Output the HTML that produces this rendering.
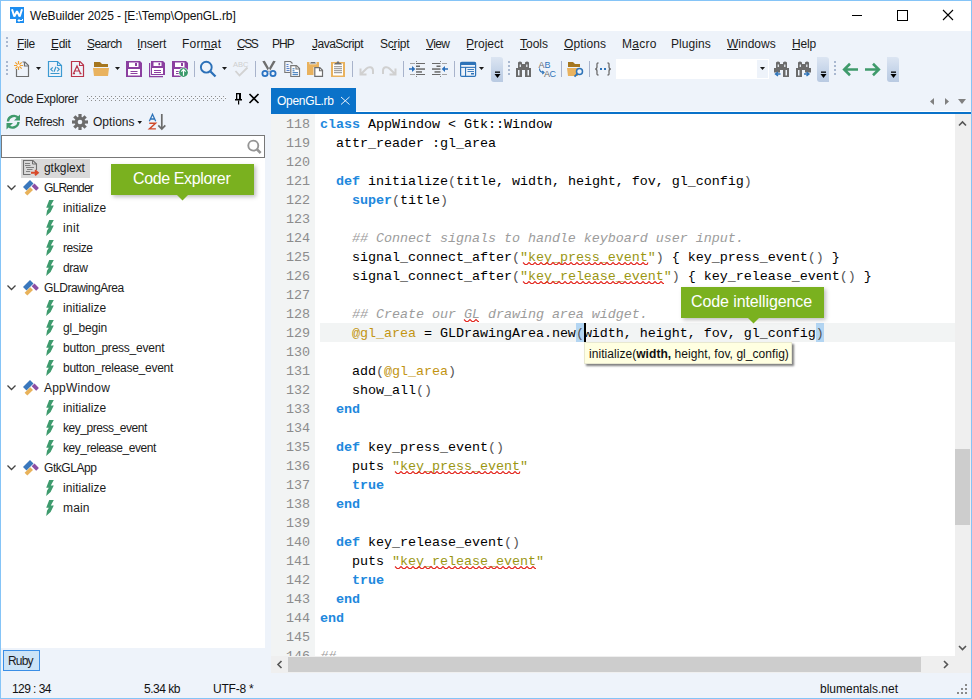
<!DOCTYPE html>
<html><head><meta charset="utf-8">
<style>
*{margin:0;padding:0;box-sizing:border-box}
html,body{width:972px;height:699px;overflow:hidden;background:#eef3fa;font-family:"Liberation Sans",sans-serif;font-size:12px;color:#000}
.a{position:absolute}
.t{position:absolute;white-space:pre;line-height:1;letter-spacing:-0.3px}
.menu .t{top:38px;color:#1b1b1b}
.ul{position:absolute;height:1px;background:#1b1b1b;top:49px}
#code{position:absolute;left:319px;top:114px;font-family:"Liberation Mono",monospace;font-size:13.4px;letter-spacing:-0.04px;line-height:19px;white-space:pre;color:#000}
#nums{position:absolute;left:285px;top:114px;font-family:"Liberation Mono",monospace;font-size:13.4px;letter-spacing:-0.04px;line-height:19px;white-space:pre;color:#8c8c8c}
.k{color:#2088dd;font-weight:bold}
.c{color:#9c9c9c;font-style:italic}
.s{color:#9a9612}
.q{color:#8a8a8a}
.v{color:#c29412}
.p{color:#555}
.tree .t{color:#1b1b1b}
svg.ov{position:absolute;left:0;top:0}
</style></head><body>
<!-- title bar -->
<div class="a" style="left:0;top:0;width:972px;height:31px;background:#fff"></div>
<div class="t" style="left:30px;top:10px;color:#111;letter-spacing:-0.1px">WeBuilder 2025 - [E:\Temp\OpenGL.rb]</div>

<!-- menu -->
<div class="menu">
 <div class="t" style="left:17px;letter-spacing:-0.35px">File</div><div class="ul" style="left:17px;width:7px"></div>
 <div class="t" style="left:51px;letter-spacing:-0.3px">Edit</div><div class="ul" style="left:51px;width:7px"></div>
 <div class="t" style="left:87px;letter-spacing:-0.55px">Search</div><div class="ul" style="left:87px;width:7px"></div>
 <div class="t" style="left:137px;letter-spacing:-0.15px">Insert</div><div class="ul" style="left:138px;width:3px"></div>
 <div class="t" style="left:182px;letter-spacing:0.2px">Format</div><div class="ul" style="left:204px;width:10px"></div>
 <div class="t" style="left:237px;letter-spacing:-1.5px">CSS</div><div class="ul" style="left:237px;width:7px"></div>
 <div class="t" style="left:272px;letter-spacing:-0.9px">PHP</div>
 <div class="t" style="left:312px;letter-spacing:-0.5px">JavaScript</div><div class="ul" style="left:312px;width:5px"></div>
 <div class="t" style="left:380px;letter-spacing:-0.2px">Script</div><div class="ul" style="left:392px;width:4px"></div>
 <div class="t" style="left:426px;letter-spacing:-0.6px">View</div><div class="ul" style="left:426px;width:7px"></div>
 <div class="t" style="left:466px;letter-spacing:0px">Project</div><div class="ul" style="left:467px;width:7px"></div>
 <div class="t" style="left:520px;letter-spacing:0px">Tools</div><div class="ul" style="left:520px;width:7px"></div>
 <div class="t" style="left:564px;letter-spacing:0.1px">Options</div><div class="ul" style="left:564px;width:9px"></div>
 <div class="t" style="left:622px;letter-spacing:0.3px">Macro</div><div class="ul" style="left:632px;width:7px"></div>
 <div class="t" style="left:671px;letter-spacing:0.08px">Plugins</div>
 <div class="t" style="left:727px;letter-spacing:0px">Windows</div><div class="ul" style="left:727px;width:11px"></div>
 <div class="t" style="left:792px;letter-spacing:-0.17px">Help</div><div class="ul" style="left:792px;width:8px"></div>
</div>

<!-- toolbar combobox -->
<div class="a" style="left:616px;top:59px;width:153px;height:20px;background:#fff"></div>
<div class="a" style="left:757px;top:60px;width:11px;height:18px;background:#eef3fa"></div>
<!-- overflow chevrons -->
<div class="a" style="left:491px;top:57px;width:12px;height:25px;background:linear-gradient(#dce5f2,#c4d3e8 60%,#b9cae2);border-radius:0 3px 0 3px"></div>
<div class="a" style="left:817px;top:57px;width:12px;height:25px;background:linear-gradient(#dce5f2,#c4d3e8 60%,#b9cae2);border-radius:0 3px 0 3px"></div>
<div class="a" style="left:887px;top:57px;width:12px;height:25px;background:linear-gradient(#dce5f2,#c4d3e8 60%,#b9cae2);border-radius:0 3px 0 3px"></div>

<!-- panel header -->
<div class="t" style="left:6px;top:93px;color:#1b1b1b;letter-spacing:-0.38px">Code Explorer</div>


<!-- tab -->
<div class="a" style="left:271px;top:88px;width:85px;height:26px;background:#0a72c9"></div>
<div class="t" style="left:277px;top:95px;color:#fff;letter-spacing:-0.3px">OpenGL.rb</div>
<div class="a" style="left:356px;top:111px;width:616px;height:1px;background:#fff"></div>
<div class="a" style="left:356px;top:112px;width:616px;height:2px;background:#0a72c9"></div>

<!-- code explorer toolbar text -->
<div class="t" style="left:25px;top:116px;color:#1b1b1b;letter-spacing:-0.42px">Refresh</div>
<div class="t" style="left:93px;top:116px;color:#1b1b1b;letter-spacing:0.03px">Options</div>

<!-- left panel -->
<div class="a" style="left:1px;top:135px;width:264px;height:513px;background:#fff"></div>
<div class="a" style="left:1px;top:135px;width:264px;height:23px;border:1px solid #787878;background:#fff"></div>
<div class="a" style="left:21px;top:159px;width:69px;height:19px;background:#d9d9d9"></div>

<div class="tree">
 <div class="t" style="left:44px;top:162px;letter-spacing:-0.06px">gtkglext</div>
 <div class="t" style="left:44px;top:182px;letter-spacing:-0.8px">GLRender</div>
 <div class="t" style="left:63px;top:202px;letter-spacing:0.05px">initialize</div>
 <div class="t" style="left:63px;top:222px;letter-spacing:0.3px">init</div>
 <div class="t" style="left:63px;top:242px;letter-spacing:-0.4px">resize</div>
 <div class="t" style="left:63px;top:262px;letter-spacing:-0.4px">draw</div>
 <div class="t" style="left:44px;top:282px;letter-spacing:-0.43px">GLDrawingArea</div>
 <div class="t" style="left:63px;top:302px;letter-spacing:0.05px">initialize</div>
 <div class="t" style="left:63px;top:322px;letter-spacing:-0.17px">gl_begin</div>
 <div class="t" style="left:63px;top:342px;letter-spacing:-0.23px">button_press_event</div>
 <div class="t" style="left:63px;top:362px;letter-spacing:-0.27px">button_release_event</div>
 <div class="t" style="left:44px;top:382px;letter-spacing:0.22px">AppWindow</div>
 <div class="t" style="left:63px;top:402px;letter-spacing:0.05px">initialize</div>
 <div class="t" style="left:63px;top:422px;letter-spacing:-0.46px">key_press_event</div>
 <div class="t" style="left:63px;top:442px;letter-spacing:-0.47px">key_release_event</div>
 <div class="t" style="left:44px;top:462px;letter-spacing:-0.44px">GtkGLApp</div>
 <div class="t" style="left:63px;top:482px;letter-spacing:0.05px">initialize</div>
 <div class="t" style="left:63px;top:502px;letter-spacing:0.15px">main</div>
</div>

<!-- Ruby button -->
<div class="a" style="left:3px;top:650px;width:37px;height:21px;border:1px solid #3a8ee6;background:#cce4f7"></div>
<div class="t" style="left:8px;top:655px;color:#1b1b1b;letter-spacing:-0.8px">Ruby</div>

<!-- editor -->
<div class="a" style="left:271px;top:114px;width:684px;height:542px;background:#fff"></div>
<div class="a" style="left:271px;top:114px;width:44px;height:542px;background:#f2f4f4"></div>
<div class="a" style="left:320px;top:323px;width:635px;height:19px;background:#f2f4f4"></div>
<div class="a" style="left:576px;top:323px;width:8px;height:19px;background:#b3d5f2"></div>
<div class="a" style="left:816px;top:323px;width:8px;height:19px;background:#b3d5f2"></div>
<div class="a" style="left:271px;top:114px;width:684px;height:542px;overflow:hidden">
<div id="nums" style="left:15px;top:1px">118
119
120
121
122
123
124
125
126
127
128
129
130
131
132
133
134
135
136
137
138
139
140
141
142
143
144
145
146</div>
<div id="code" style="left:49px;top:1px"><span class="k">class</span> AppWindow &lt; Gtk::Window
  attr_reader :gl_area

  <span class="k">def</span> initialize<span class="p">(</span>title, width, height, fov, gl_config<span class="p">)</span>
    <span class="k">super</span><span class="p">(</span>title<span class="p">)</span>

    <span class="c">## Connect signals to handle keyboard user input.</span>
    signal_connect_after<span class="p">(</span><span class="s">"key_press_event"</span><span class="p">)</span> { key_press_event<span class="p">()</span> }
    signal_connect_after<span class="p">(</span><span class="s">"key_release_event"</span><span class="p">)</span> { key_release_event<span class="p">()</span> }

    <span class="c">## Create our GL drawing area widget.</span>
    <span class="v">@gl_area</span> = GLDrawingArea.new<span class="p">(</span>width, height, fov, gl_config<span class="p">)</span>

    add<span class="p">(</span><span class="v">@gl_area</span><span class="p">)</span>
    show_all<span class="p">()</span>
  <span class="k">end</span>

  <span class="k">def</span> key_press_event<span class="p">()</span>
    puts <span class="s">"key_press_event"</span>
    <span class="k">true</span>
  <span class="k">end</span>

  <span class="k">def</span> key_release_event<span class="p">()</span>
    puts <span class="s">"key_release_event"</span>
    <span class="k">true</span>
  <span class="k">end</span>
<span class="k">end</span>

<span class="c">##</span></div>
</div>
<!-- caret -->
<div class="a" style="left:584px;top:323px;width:2px;height:19px;background:#000"></div>

<!-- scrollbars -->
<div class="a" style="left:955px;top:114px;width:16px;height:559px;background:#efefef"></div>
<div class="a" style="left:955px;top:449px;width:15px;height:76px;background:#cdcdcd"></div>
<div class="a" style="left:271px;top:656px;width:700px;height:17px;background:#efefef"></div>
<div class="a" style="left:288px;top:657px;width:633px;height:15px;background:#cdcdcd"></div>

<!-- status -->
<div class="t" style="left:12px;top:683px;color:#111;letter-spacing:-0.56px">129 : 34</div>
<div class="t" style="left:144px;top:683px;color:#111;letter-spacing:-0.5px">5.34 kb</div>
<div class="t" style="left:213px;top:683px;color:#111;letter-spacing:-0.23px">UTF-8 *</div>
<div class="t" style="left:820px;top:683px;color:#111;letter-spacing:0px">blumentals.net</div>

<!-- SVG icons overlay -->
<svg class="ov" width="972" height="699" viewBox="0 0 972 699">
 <!-- logo -->
 <rect x="10" y="7" width="14" height="12" fill="#1e8ef0"/>
 <rect x="16" y="18" width="8" height="5" fill="#1e8ef0"/>
 <path d="M12 9.2 L14.3 16.5 L17 11.2 L19.7 16.5 L22 9.2" stroke="#fff" stroke-width="2" fill="none" stroke-linejoin="bevel"/>
 <path d="M22.5 19 V20.5 H18 M19.5 19 L18 20.5 L19.5 22" stroke="#fff" stroke-width="1" fill="none"/>
 <!-- window controls -->
 <rect x="852" y="15" width="10" height="1" fill="#000"/>
 <rect x="897.5" y="10.5" width="10" height="10" fill="none" stroke="#000" stroke-width="1"/>
 <path d="M943 10 L953 20 M953 10 L943 20" stroke="#000" stroke-width="1.1"/>

 <defs><pattern id="dots" patternUnits="userSpaceOnUse" x="87" y="96" width="4" height="4"><rect x="0" y="0" width="1" height="1" fill="#8e8e8e"/><rect x="2" y="2" width="1" height="1" fill="#8e8e8e"/><rect x="0" y="-1" width="1" height="1" fill="#fff"/><rect x="2" y="1" width="1" height="1" fill="#fff"/></pattern></defs>
 <rect x="87" y="95" width="139" height="6" fill="url(#dots)"/>
 <!-- grips -->
 <g fill="#a9b8d0">
  <rect x="6" y="37" width="2" height="2"/><rect x="6" y="41" width="2" height="2"/><rect x="6" y="45" width="2" height="2"/>
  <rect x="6" y="61" width="2" height="2"/><rect x="6" y="65" width="2" height="2"/><rect x="6" y="69" width="2" height="2"/><rect x="6" y="73" width="2" height="2"/>
  <rect x="508" y="61" width="2" height="2"/><rect x="508" y="65" width="2" height="2"/><rect x="508" y="69" width="2" height="2"/><rect x="508" y="73" width="2" height="2"/>
  <rect x="834" y="61" width="2" height="2"/><rect x="834" y="65" width="2" height="2"/><rect x="834" y="69" width="2" height="2"/><rect x="834" y="73" width="2" height="2"/>
 </g>
 <!-- separators -->
 <g fill="#a8b3cb">
  <rect x="194" y="61" width="1" height="16"/><rect x="255" y="61" width="1" height="16"/>
  <rect x="352" y="61" width="1" height="16"/><rect x="403" y="61" width="1" height="16"/>
  <rect x="454" y="61" width="1" height="16"/><rect x="561" y="61" width="1" height="16"/>
  <rect x="589" y="61" width="1" height="16"/>
 </g>
 <!-- dropdown triangles -->
 <g fill="#1a1a1a">
  <path d="M36 67 H41 L38.5 70 Z"/><path d="M115 67 H120 L117.5 70 Z"/>
  <path d="M222 67 H227 L224.5 70 Z"/><path d="M479 67 H484 L481.5 70 Z"/>
  <path d="M760 67 H765 L762.5 70 Z"/>
  <path d="M137.5 121 H142 L139.75 124 Z"/>
 </g>
 <!-- chevron symbols -->
 <g fill="#000">
  <rect x="495" y="71.5" width="5" height="1.3"/><path d="M494.5 74 H500.5 L497.5 78 Z"/>
  <rect x="821" y="71.5" width="5" height="1.3"/><path d="M820.5 74 H826.5 L823.5 78 Z"/>
  <rect x="891" y="71.5" width="5" height="1.3"/><path d="M890.5 74 H896.5 L893.5 78 Z"/>
 </g>

 <!-- new file -->
 <path d="M16.5 69 V76.5 H28.5 V65.5 L25 62 H22.5" fill="none" stroke="#6e6e6e" stroke-width="1.2"/>
 <path d="M24.5 62 V66 H28.5" fill="none" stroke="#6e6e6e" stroke-width="1.2"/>
 <g stroke="#f0a234" stroke-width="1.2"><path d="M18.5 61 V70 M14 65.5 H23 M15.3 62.3 L21.7 68.7 M21.7 62.3 L15.3 68.7"/></g>
 <circle cx="18.5" cy="65.5" r="1.3" fill="#fff"/>
 <!-- html doc -->
 <path d="M48.5 61.5 H57.5 L61.5 65.5 V76.5 H48.5 Z" fill="none" stroke="#3c9ad2" stroke-width="1.2"/>
 <path d="M57.5 61.5 V65.5 H61.5" fill="none" stroke="#3c9ad2" stroke-width="1.1"/>
 <path d="M52.8 67.3 L50.8 69.3 L52.8 71.3 M57.2 67.3 L59.2 69.3 L57.2 71.3 M56 66.8 L54 71.8" fill="none" stroke="#3a97cc" stroke-width="1.2"/>
 <rect x="50.5" y="73" width="9" height="1" fill="#3a97cc"/>
 <!-- red doc -->
 <path d="M71.5 61.5 H80 L83.5 65 V76.5 H71.5 Z" fill="none" stroke="#b9344a" stroke-width="1.2"/>
 <path d="M79.5 61.5 V65.5 H83.5" fill="none" stroke="#b9344a" stroke-width="1.1"/>
 <path d="M73.5 73.5 L77 66 L80.5 73.5 M74.8 71 H79.2 M72.8 73.6 H75 M79.5 73.6 H81.5" fill="none" stroke="#b9344a" stroke-width="1.2"/>
 <!-- folder -->
 <path d="M94 62 H100 L102 64 H108 V67 H94 Z" fill="#a5761f"/>
 <path d="M93 68 H109 L108 76 H94 Z" fill="#e9b25e"/>
 <!-- save -->
 <g id="sv">
 <path d="M126 61 H140 L142 63 V77 H126 Z" fill="#8b3fa0"/>
 <rect x="129" y="62.5" width="9.5" height="4.5" fill="#fff"/>
 <rect x="135" y="63" width="2" height="3" fill="#8b3fa0"/>
 <rect x="128" y="69" width="12" height="6.5" fill="#fff"/>
 <rect x="130.5" y="71" width="7" height="1" fill="#8b3fa0"/>
 <rect x="130.5" y="73" width="7" height="1" fill="#8b3fa0"/>
 </g>
 <!-- save all -->
 <path d="M151 61 H163 L165 63 V75 H151 Z" fill="#8b3fa0"/>
 <rect x="153.5" y="62.3" width="8" height="3.7" fill="#fff"/>
 <rect x="158.5" y="63" width="1.6" height="2.3" fill="#8b3fa0"/>
 <rect x="152" y="68" width="11" height="6" fill="#fff"/>
 <rect x="154" y="70" width="7" height="1" fill="#8b3fa0"/>
 <rect x="154" y="72" width="7" height="1" fill="#8b3fa0"/>
 <path d="M149.6 63 V76.6 H163" fill="none" stroke="#8b3fa0" stroke-width="1.2"/>
 <!-- save upload -->
 <path d="M172 61 H186 L188 63 V70 H181 V77 H172 Z" fill="#8b3fa0"/>
 <rect x="175" y="62.5" width="9.5" height="4.5" fill="#fff"/>
 <rect x="181" y="63" width="2" height="3" fill="#8b3fa0"/>
 <rect x="174" y="69" width="7" height="6.5" fill="#fff"/>
 <rect x="176" y="71" width="3" height="1" fill="#8b3fa0"/><rect x="176" y="73" width="3" height="1" fill="#8b3fa0"/>
 <circle cx="183.5" cy="72.5" r="5" fill="#fff"/>
 <circle cx="183.5" cy="72.5" r="4.4" fill="#3b9a6b"/>
 <path d="M183.5 75.8 V69.5 M181.3 71.6 L183.5 69.3 L185.7 71.6" fill="none" stroke="#fff" stroke-width="1.2"/>
 <!-- search -->
 <circle cx="206.3" cy="67.2" r="5.4" fill="none" stroke="#2b70b8" stroke-width="1.9"/>
 <path d="M210.5 71.5 L215.5 76.5" stroke="#2b70b8" stroke-width="2.3"/>
 <!-- ABC check disabled -->
 <text x="233" y="66.5" font-family="Liberation Sans" font-size="7.5" fill="#cfcfcf">ABC</text>
 <path d="M235.5 71 L239.5 75.5 L247.5 67.5" fill="none" stroke="#d2d2d2" stroke-width="1.8"/>
 <!-- scissors -->
 <path d="M262.3 61.3 L264.8 60.8 L270.2 70.3 L268.6 72 Z M275.7 61.3 L273.2 60.8 L267.8 70.3 L269.4 72 Z" fill="#6e6e6e"/>
 <circle cx="265" cy="73.5" r="2.6" fill="none" stroke="#2a73c2" stroke-width="1.8"/>
 <circle cx="273" cy="73.5" r="2.6" fill="none" stroke="#2a73c2" stroke-width="1.8"/>
 <!-- copy -->
 <path d="M290 72.5 H284.8 V61.5 H290.5 L292.5 63.5" fill="none" stroke="#777" stroke-width="1.1"/>
 <g fill="#4a78c8"><rect x="286.5" y="64" width="2" height="0.9"/><rect x="286.5" y="66" width="2" height="0.9"/><rect x="286.5" y="68" width="3" height="0.9"/><rect x="286.5" y="70" width="3" height="0.9"/></g>
 <path d="M290.8 65.6 H296.5 L299.5 68.6 V76.5 H290.8 Z" fill="#fff" stroke="#777" stroke-width="1.2"/>
 <path d="M296 65.6 V69 H299.5" fill="none" stroke="#777" stroke-width="1.1"/>
 <g fill="#2a6db5"><rect x="292.5" y="68.3" width="2" height="1"/><rect x="292.5" y="70.3" width="2" height="1"/><rect x="292.5" y="72.2" width="5.5" height="1"/><rect x="292.5" y="74.2" width="5.5" height="1"/></g>
 <!-- paste -->
 <path d="M307 62 H319 V67 H313.5 V75 H307 Z" fill="#e9b25e"/>
 <rect x="309.5" y="62" width="7" height="2.3" fill="#eef3fa"/>
 <path d="M310 63.5 H316 L315 62 H311 Z" fill="#707070"/>
 <path d="M314.8 67.6 H319.8 L322.5 70.3 V76.3 H314.8 Z" fill="#fff" stroke="#6e6e6e" stroke-width="1.2"/>
 <path d="M319.5 67.6 V70.8 H322.5" fill="none" stroke="#6e6e6e" stroke-width="1.1"/>
 <!-- clipboard -->
 <rect x="331" y="62" width="14" height="15" fill="#e9b25e"/>
 <rect x="333" y="63.5" width="10" height="12" fill="#fff"/>
 <path d="M334 64.5 H342 L341 63 H339.5 L339 61.5 H337 L336.5 63 H335 Z" fill="#6e6e6e"/>
 <g fill="#8a8a8a"><rect x="334" y="66.2" width="8" height="1"/><rect x="334" y="68.2" width="8" height="1"/><rect x="334" y="70.2" width="8" height="1"/><rect x="334" y="72.2" width="8" height="1"/></g>
 <!-- undo/redo disabled -->
 <path d="M360.5 68.5 V74.5 H366.5 M360.8 74.2 L366.3 68.7 C368.8 66.2 373 66.8 373 70.8 V74" fill="none" stroke="#d0d0d0" stroke-width="2"/>
 <path d="M395.5 68.5 V74.5 H389.5 M395.2 74.2 L389.7 68.7 C387.2 66.2 383 66.8 383 70.8 V74" fill="none" stroke="#d0d0d0" stroke-width="2"/>
 <!-- indent -->
 <g fill="#6a6a6a">
  <rect x="416" y="63" width="9" height="1"/><rect x="416" y="65.5" width="4" height="1.5"/><rect x="416" y="68.3" width="9" height="1.5"/><rect x="416" y="71.2" width="6" height="1.5"/><rect x="416" y="74" width="9" height="1"/>
  <rect x="410" y="63" width="5" height="0.9" fill="#9a9a9a"/><rect x="410" y="74" width="5" height="0.9" fill="#9a9a9a"/>
  <rect x="416" y="61" width="0.8" height="1" /><rect x="416" y="76" width="0.8" height="1"/>
  <rect x="432" y="63" width="8.5" height="1"/><rect x="436.5" y="65.5" width="4" height="1.5"/><rect x="432" y="68.3" width="8.5" height="1.5"/><rect x="434.5" y="71.2" width="6" height="1.5"/><rect x="432" y="74" width="8.5" height="1"/>
  <rect x="442" y="63" width="5" height="0.9" fill="#9a9a9a"/><rect x="442" y="74" width="5" height="0.9" fill="#9a9a9a"/>
  <rect x="440" y="61" width="0.8" height="1" /><rect x="440" y="76" width="0.8" height="1"/>
 </g>
 <path d="M409 68.3 H412 V66 L415.3 69 L412 72 V69.8 H409 Z" fill="#2b6fba"/>
 <path d="M448 68.3 H445 V66 L441.7 69 L445 72 V69.8 H448 Z" fill="#2b6fba"/>
 <!-- layout -->
 <rect x="460.6" y="62.4" width="15" height="14" rx="1.2" fill="none" stroke="#2e73b8" stroke-width="1.2"/>
 <rect x="460.6" y="62.4" width="15" height="2.6" fill="#2e73b8"/>
 <rect x="461" y="66.8" width="14.5" height="1.1" fill="#2e73b8"/>
 <rect x="465" y="67" width="1.1" height="9.5" fill="#2e73b8"/>
 <rect x="467.5" y="69" width="6.5" height="0.9" fill="#2e73b8"/><rect x="467.5" y="71" width="6.5" height="0.9" fill="#2e73b8"/><rect x="471" y="73" width="3" height="1.5" fill="#2e73b8"/>
 <!-- binoculars -->
 <g id="bino" fill="#6b6b6b">
  <path d="M518 62.5 Q520 60.3 522 62.5 V64 H525 V62.5 Q527 60.3 529 62.5 V68 H531 V77 H525 V70 H522 V77 H516 V68 H518 Z"/>
 </g>
 <g fill="#eef3fa"><rect x="518" y="70" width="1.5" height="5.5"/><rect x="527.5" y="70" width="1.5" height="5.5"/><rect x="519.7" y="64.5" width="1.2" height="2.5"/><rect x="526.2" y="64.5" width="1.2" height="2.5"/></g>
 <!-- ABC replace -->
 <text x="538.5" y="67.5" font-family="Liberation Sans" font-size="9" fill="#6b6b6b">A</text>
 <text x="544.5" y="67.5" font-family="Liberation Sans" font-size="9" fill="#2e73b8">B</text>
 <text x="544" y="77" font-family="Liberation Sans" font-size="9" fill="#6b6b6b">A</text>
 <text x="549.5" y="77" font-family="Liberation Sans" font-size="9" fill="#2e73b8">C</text>
 <path d="M539.5 68.5 C539.5 71 541 72.5 544 72.5 M542.3 71 L544 72.5 L542.3 74" fill="none" stroke="#2e73b8" stroke-width="1.1"/>
 <!-- folder search -->
 <path d="M568 62 H573 L575 64 H580 V67 H568 Z" fill="#a5761f"/>
 <path d="M567 68 H579 L578 76 H568 Z" fill="#e9b25e"/>
 <circle cx="579.5" cy="71.5" r="3" fill="#eef3fa" stroke="#2e73b8" stroke-width="1.5"/>
 <path d="M577.5 73.7 L574.5 76.7" stroke="#2e73b8" stroke-width="1.8"/>
 <!-- braces -->
 <path d="M598.5 63 C596.5 63 597 64 597 66.5 C597 68.5 596.5 69 595.2 69 C596.5 69 597 69.5 597 71.5 C597 74 596.5 75 598.5 75" fill="none" stroke="#6b6b6b" stroke-width="1.3"/>
 <path d="M607.5 63 C609.5 63 609 64 609 66.5 C609 68.5 609.5 69 610.8 69 C609.5 69 609 69.5 609 71.5 C609 74 609.5 75 607.5 75" fill="none" stroke="#6b6b6b" stroke-width="1.3"/>
 <rect x="600" y="68" width="2" height="2" fill="#2e73b8"/><rect x="604" y="68" width="2" height="2" fill="#2e73b8"/>
 <!-- bino prev -->
 <path d="M776 62.5 Q778 60.3 780 62.5 V64 H783 V62.5 Q785 60.3 787 62.5 V68 H789 V77 H783 V70 H780 V72.5 H774 V68 H776 Z" fill="#6b6b6b"/><rect x="777.7" y="64.5" width="1.2" height="2.5" fill="#eef3fa"/><rect x="784.2" y="64.5" width="1.2" height="2.5" fill="#eef3fa"/>
 <rect x="785.5" y="70" width="1.5" height="5.5" fill="#eef3fa"/>
 <path d="M780.5 74 H776 M778 72 L775.5 74 L778 76" fill="none" stroke="#2e73b8" stroke-width="1.4"/>
 <path d="M798 62.5 Q800 60.3 802 62.5 V64 H805 V62.5 Q807 60.3 809 62.5 V68 H811 V72.5 H805 V70 H802 V77 H796 V68 H798 Z" fill="#6b6b6b"/><rect x="799.7" y="64.5" width="1.2" height="2.5" fill="#eef3fa"/><rect x="806.2" y="64.5" width="1.2" height="2.5" fill="#eef3fa"/>
 <rect x="798" y="70" width="1.5" height="5.5" fill="#eef3fa"/>
 <path d="M804 74 H808.5 M806.5 72 L809 74 L806.5 76" fill="none" stroke="#2e73b8" stroke-width="1.4"/>
 <!-- green arrows -->
 <path d="M858 69.5 H845 M850 63.8 L844.2 69.5 L850 75.2" fill="none" stroke="#3f9a6b" stroke-width="2.6"/>
 <path d="M865 69.5 H878 M873 63.8 L878.8 69.5 L873 75.2" fill="none" stroke="#3f9a6b" stroke-width="2.6"/>

 <!-- panel header pin/x -->
 <path d="M236 93 H241 V99 H236 Z" fill="#000"/>
 <rect x="237.3" y="94.3" width="1.7" height="4.6" fill="#eef3fa"/>
 <rect x="235" y="99" width="7" height="1.5" fill="#000"/>
 <rect x="238" y="100.5" width="1.2" height="4" fill="#000"/>
 <path d="M249.5 94 L258.5 103 M258.5 94 L249.5 103" stroke="#000" stroke-width="1.6"/>
 <!-- tab close -->
 <path d="M341 97 L349.5 104.5 M349.5 97 L341 104.5" stroke="#e6f0fa" stroke-width="1"/>
 <!-- tab nav arrows -->
 <path d="M934 98 V105 L930 101.5 Z" fill="#808080"/>
 <path d="M945 98 V105 L949 101.5 Z" fill="#808080"/>
 <path d="M958 99 H966 L962 104 Z" fill="#808080"/>

 <!-- refresh icon -->
 <path d="M18.5 118 A6 6 0 0 0 8 121.5" fill="none" stroke="#3f9a6b" stroke-width="2.4"/>
 <path d="M20 114.5 V120.5 H14 Z" fill="#3f9a6b"/>
 <path d="M8 125.5 A6 6 0 0 0 18.5 122" fill="none" stroke="#3f9a6b" stroke-width="2.4"/>
 <path d="M6.5 129.5 V123 H13 Z" fill="#3f9a6b"/>
 <!-- gear -->
 <g transform="translate(80,122)">
  <circle r="5.2" fill="#6b6b6b"/>
  <g fill="#6b6b6b"><rect x="-1.6" y="-8" width="3.2" height="16"/><rect x="-1.6" y="-8" width="3.2" height="16" transform="rotate(45)"/><rect x="-1.6" y="-8" width="3.2" height="16" transform="rotate(90)"/><rect x="-1.6" y="-8" width="3.2" height="16" transform="rotate(135)"/></g>
  <circle r="2.3" fill="#eef3fa"/>
 </g>
 <!-- AZ -->
 <path d="M149.3 121.2 L152.5 114.3 L155.7 121.2 M150.4 119 H154.6" fill="none" stroke="#2e73b8" stroke-width="1.3"/>
 <path d="M149.3 123.2 H155.6 L149.4 128.9 H155.9" fill="none" stroke="#d04a2a" stroke-width="1.4"/>
 <path d="M161.8 114 V129 M158.3 125.3 L161.8 129 L165.3 125.3" fill="none" stroke="#6b6b6b" stroke-width="1.7"/>

 <!-- search box icon -->
 <circle cx="253.3" cy="145.6" r="5" fill="none" stroke="#959595" stroke-width="1.9"/>
 <path d="M256.8 149.2 L260.6 153" stroke="#959595" stroke-width="2.6"/>

 <!-- tree icons -->
 <!-- doc w/ arrow -->
 <path d="M23.5 160.5 H33 L36.5 164 V174.5 H23.5 Z" fill="none" stroke="#6f6f6f" stroke-width="1.1"/>
 <path d="M32.5 160.5 V164 H36.5" fill="none" stroke="#6f6f6f" stroke-width="1"/>
 <g fill="#777"><rect x="25" y="163" width="5" height="0.9"/><rect x="25" y="165" width="5.5" height="0.9"/><rect x="26" y="167" width="8" height="0.9"/><rect x="27" y="169" width="5.5" height="0.9"/><rect x="26" y="171" width="4.5" height="0.9"/></g>
 <rect x="30.5" y="170" width="9" height="5" fill="#d9d9d9"/>
 <path d="M31 172.8 H37 M35 170.3 L37.8 172.8 L35 175.3" fill="none" stroke="#d84a2a" stroke-width="2"/>
 <!-- chevrons -->
 <g fill="none" stroke="#444" stroke-width="1.3">
  <path d="M7.5 185.5 L11.5 189.5 L15.5 185.5"/>
  <path d="M7.5 285.5 L11.5 289.5 L15.5 285.5"/>
  <path d="M7.5 385.5 L11.5 389.5 L15.5 385.5"/>
  <path d="M7.5 465.5 L11.5 469.5 L15.5 465.5"/>
 </g>
 <defs>
  <g id="cls">
   <path d="M23 187 L30 180 L33.5 183.5 L26.5 190.5 Z" fill="#3a78bd"/>
   <path d="M31.7 186.2 L34.5 183.6 L38.9 188 L36.2 190.8 Z" fill="#8b4fa5"/>
   <path d="M24.6 192.8 L30.3 187.3 L33 190 L27.3 195.6 Z" fill="#e8b25a"/>
  </g>
  <path id="bolt" d="M49.2 200 H53.8 L50.8 205.6 H53.8 L50.6 212 L46.2 216 L47 210.8 L48.8 207.8 H46.2 Z" fill="#3e9b6e"/>
 </defs>
 <use href="#cls"/>
 <use href="#cls" y="100"/>
 <use href="#cls" y="200"/>
 <use href="#cls" y="280"/>
 <use href="#bolt"/><use href="#bolt" y="20"/><use href="#bolt" y="40"/><use href="#bolt" y="60"/>
 <use href="#bolt" y="100"/><use href="#bolt" y="120"/><use href="#bolt" y="140"/><use href="#bolt" y="160"/>
 <use href="#bolt" y="200"/><use href="#bolt" y="220"/><use href="#bolt" y="240"/>
 <use href="#bolt" y="280"/><use href="#bolt" y="300"/>

 <!-- scroll arrows -->
 <path d="M959 125.5 L962.5 122 L966 125.5" fill="none" stroke="#555" stroke-width="1.6"/>
 <path d="M959 646 L962.5 649.5 L966 646" fill="none" stroke="#555" stroke-width="1.6"/>
 <path d="M281.5 661 L278 664.5 L281.5 668" fill="none" stroke="#555" stroke-width="1.6"/>
 <path d="M944 661 L947.5 664.5 L944 668" fill="none" stroke="#555" stroke-width="1.6"/>
 <!-- resize grip -->
 <g fill="#8a8a8a"><rect x="965" y="684" width="2" height="2"/><rect x="961" y="688" width="2" height="2"/><rect x="965" y="688" width="2" height="2"/><rect x="957" y="692" width="2" height="2"/><rect x="961" y="692" width="2" height="2"/><rect x="965" y="692" width="2" height="2"/></g>
 <!-- squiggles -->
 <g fill="none" stroke="#e3261e" stroke-width="1.1">
  <path d="M523.0 262.5 L525.0 264.5 L527.0 264.5 L529.0 262.5 L531.0 264.5 L533.0 264.5 L535.0 262.5 L537.0 264.5 L539.0 264.5 L541.0 262.5 L543.0 264.5 L545.0 264.5 L547.0 262.5 L549.0 264.5 L551.0 264.5 L553.0 262.5 L555.0 264.5 L557.0 264.5 L559.0 262.5 L561.0 264.5 L563.0 264.5 L565.0 262.5 L567.0 264.5 L569.0 264.5 L571.0 262.5 L573.0 264.5 L575.0 264.5 L577.0 262.5 L579.0 264.5 L581.0 264.5 L583.0 262.5 L585.0 264.5 L587.0 264.5 L589.0 262.5 L591.0 264.5 L593.0 264.5 L595.0 262.5 L597.0 264.5 L599.0 264.5 L601.0 262.5 L603.0 264.5 L605.0 264.5 L607.0 262.5 L609.0 264.5 L611.0 264.5 L613.0 262.5 L615.0 264.5 L617.0 264.5 L619.0 262.5 L621.0 264.5 L623.0 264.5 L625.0 262.5 L627.0 264.5 L629.0 264.5 L631.0 262.5 L633.0 264.5 L635.0 264.5 L637.0 262.5 L639.0 264.5 L641.0 264.5 L643.0 262.5 L645.0 264.5 L647.0 264.5 L648.0 262.5"/>
  <path d="M523.0 281.5 L525.0 283.5 L527.0 283.5 L529.0 281.5 L531.0 283.5 L533.0 283.5 L535.0 281.5 L537.0 283.5 L539.0 283.5 L541.0 281.5 L543.0 283.5 L545.0 283.5 L547.0 281.5 L549.0 283.5 L551.0 283.5 L553.0 281.5 L555.0 283.5 L557.0 283.5 L559.0 281.5 L561.0 283.5 L563.0 283.5 L565.0 281.5 L567.0 283.5 L569.0 283.5 L571.0 281.5 L573.0 283.5 L575.0 283.5 L577.0 281.5 L579.0 283.5 L581.0 283.5 L583.0 281.5 L585.0 283.5 L587.0 283.5 L589.0 281.5 L591.0 283.5 L593.0 283.5 L595.0 281.5 L597.0 283.5 L599.0 283.5 L601.0 281.5 L603.0 283.5 L605.0 283.5 L607.0 281.5 L609.0 283.5 L611.0 283.5 L613.0 281.5 L615.0 283.5 L617.0 283.5 L619.0 281.5 L621.0 283.5 L623.0 283.5 L625.0 281.5 L627.0 283.5 L629.0 283.5 L631.0 281.5 L633.0 283.5 L635.0 283.5 L637.0 281.5 L639.0 283.5 L641.0 283.5 L643.0 281.5 L645.0 283.5 L647.0 283.5 L649.0 281.5 L651.0 283.5 L653.0 283.5 L655.0 281.5 L657.0 283.5 L659.0 283.5 L661.0 281.5 L663.0 283.5 L664.0 283.5"/>
  <path d="M464.0 319.5 L466.0 321.5 L468.0 321.5 L470.0 319.5 L472.0 321.5 L474.0 321.5 L476.0 319.5 L478.0 321.5 L479.0 321.5"/>
  <path d="M395.0 471.5 L397.0 473.5 L399.0 473.5 L401.0 471.5 L403.0 473.5 L405.0 473.5 L407.0 471.5 L409.0 473.5 L411.0 473.5 L413.0 471.5 L415.0 473.5 L417.0 473.5 L419.0 471.5 L421.0 473.5 L423.0 473.5 L425.0 471.5 L427.0 473.5 L429.0 473.5 L431.0 471.5 L433.0 473.5 L435.0 473.5 L437.0 471.5 L439.0 473.5 L441.0 473.5 L443.0 471.5 L445.0 473.5 L447.0 473.5 L449.0 471.5 L451.0 473.5 L453.0 473.5 L455.0 471.5 L457.0 473.5 L459.0 473.5 L461.0 471.5 L463.0 473.5 L465.0 473.5 L467.0 471.5 L469.0 473.5 L471.0 473.5 L473.0 471.5 L475.0 473.5 L477.0 473.5 L479.0 471.5 L481.0 473.5 L483.0 473.5 L485.0 471.5 L487.0 473.5 L489.0 473.5 L491.0 471.5 L493.0 473.5 L495.0 473.5 L497.0 471.5 L499.0 473.5 L501.0 473.5 L503.0 471.5 L505.0 473.5 L507.0 473.5 L509.0 471.5 L511.0 473.5 L513.0 473.5 L515.0 471.5 L517.0 473.5 L519.0 473.5 L520.0 471.5"/>
  <path d="M395.0 566.5 L397.0 568.5 L399.0 568.5 L401.0 566.5 L403.0 568.5 L405.0 568.5 L407.0 566.5 L409.0 568.5 L411.0 568.5 L413.0 566.5 L415.0 568.5 L417.0 568.5 L419.0 566.5 L421.0 568.5 L423.0 568.5 L425.0 566.5 L427.0 568.5 L429.0 568.5 L431.0 566.5 L433.0 568.5 L435.0 568.5 L437.0 566.5 L439.0 568.5 L441.0 568.5 L443.0 566.5 L445.0 568.5 L447.0 568.5 L449.0 566.5 L451.0 568.5 L453.0 568.5 L455.0 566.5 L457.0 568.5 L459.0 568.5 L461.0 566.5 L463.0 568.5 L465.0 568.5 L467.0 566.5 L469.0 568.5 L471.0 568.5 L473.0 566.5 L475.0 568.5 L477.0 568.5 L479.0 566.5 L481.0 568.5 L483.0 568.5 L485.0 566.5 L487.0 568.5 L489.0 568.5 L491.0 566.5 L493.0 568.5 L495.0 568.5 L497.0 566.5 L499.0 568.5 L501.0 568.5 L503.0 566.5 L505.0 568.5 L507.0 568.5 L509.0 566.5 L511.0 568.5 L513.0 568.5 L515.0 566.5 L517.0 568.5 L519.0 568.5 L521.0 566.5 L523.0 568.5 L525.0 568.5 L527.0 566.5 L529.0 568.5 L531.0 568.5 L533.0 566.5 L535.0 568.5 L536.0 568.5"/>
 </g>
</svg>

<!-- green callouts -->
<div class="a" style="left:111px;top:164px;width:143px;height:31px;background:#7ab11f;box-shadow:2px 2px 4px rgba(0,0,0,.25)"></div>
<svg class="a" style="left:176px;top:194px" width="13" height="7"><path d="M0 0 H13 L6.5 6.5 Z" fill="#7ab11f"/></svg>
<div class="t" style="left:133px;top:171px;color:#fff;font-size:16px;letter-spacing:-0.38px">Code Explorer</div>

<div class="a" style="left:681px;top:287px;width:143px;height:31px;background:#7ab11f;box-shadow:2px 2px 4px rgba(0,0,0,.25)"></div>
<svg class="a" style="left:747px;top:317px" width="13" height="7"><path d="M0 0 H13 L6.5 6.5 Z" fill="#7ab11f"/></svg>
<div class="t" style="left:691px;top:294px;color:#fff;font-size:16px;letter-spacing:-0.1px">Code intelligence</div>

<!-- yellow tooltip -->
<div class="a" style="left:584px;top:342px;width:208px;height:22px;background:#ffffe1;border:1px solid #e8e8d0;box-shadow:2px 2px 2px rgba(0,0,0,.5)"></div>
<div class="t" style="left:589px;top:348px;color:#111;letter-spacing:0.05px">initialize(<b>width,</b> height, fov, gl_config)</div>

<!-- window border -->
<div class="a" style="left:0;top:0;width:972px;height:699px;border:1px solid #85c4f7"></div>
</body></html>
